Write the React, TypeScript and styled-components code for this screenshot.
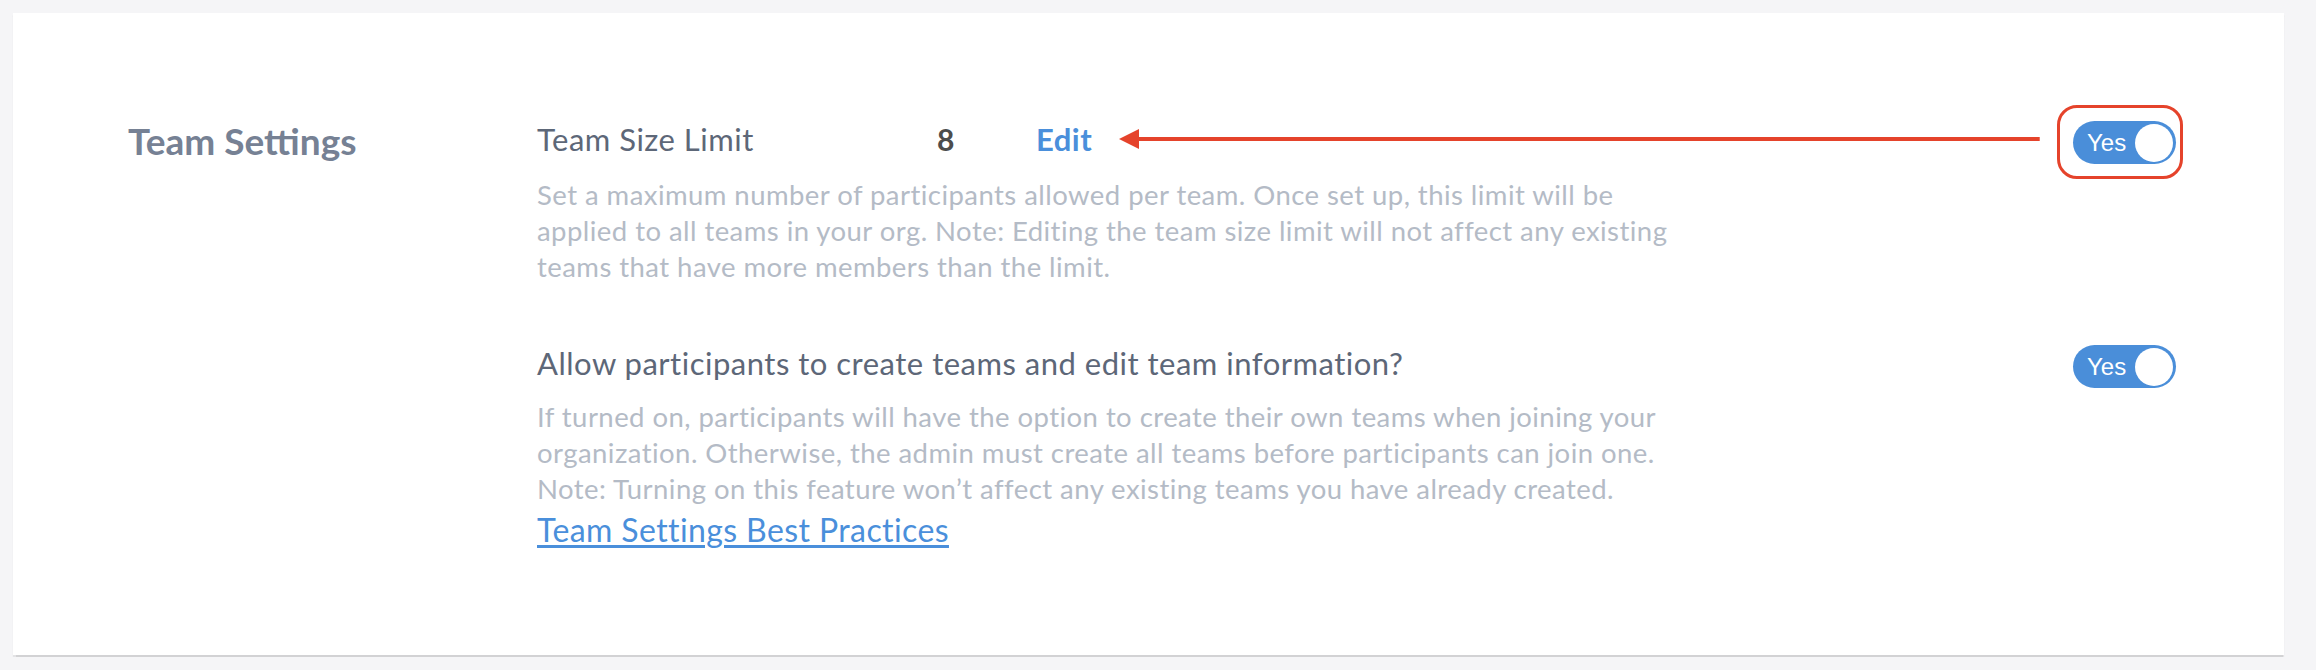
import React from "react";
import styled, { createGlobalStyle } from "styled-components";

const GlobalStyle = createGlobalStyle`
  html, body {
    margin: 0;
    padding: 0;
    background: #f5f5f7;
  }
  body {
    font-family: Lato, "Open Sans", sans-serif;
  }
`;

const Page = styled.div`
  padding: 13px 32px 15px 13px;
  background: #f5f5f7;
`;

const Card = styled.section`
  box-sizing: border-box;
  height: 642px;
  background: #ffffff;
  box-shadow: 0 1.5px 1px rgba(0, 0, 0, 0.14);
  padding: 105px 108px 0 115px;
  display: flex;
  align-items: flex-start;
`;

const SectionLabel = styled.h2`
  margin: 0;
  width: 409px;
  flex: none;
  font-family: Lato, sans-serif;
  font-weight: 700;
  font-size: 37px;
  line-height: 46px;
  color: #768194;
`;

const Settings = styled.div`
  flex: 1;
  display: flex;
  flex-direction: column;
`;

const Setting = styled.div<{ $gap?: number }>`
  display: flex;
  flex-direction: column;
  margin-top: ${(p) => p.$gap ?? 0}px;
`;

const Header = styled.div`
  display: flex;
  align-items: flex-start;
`;

const Title = styled.div<{ $width?: number }>`
  font-size: 31px;
  letter-spacing: 0.5px;
  line-height: 42px;
  color: #5d6778;
  flex: ${(p) => (p.$width ? "none" : "1")};
  width: ${(p) => (p.$width ? `${p.$width}px` : "auto")};
`;

const Value = styled.div`
  width: 99px;
  flex: none;
  font-size: 30px;
  line-height: 42px;
  font-weight: 700;
  color: #4d4d4d;
`;

const EditLink = styled.a`
  font-size: 31px;
  letter-spacing: 0.5px;
  line-height: 42px;
  font-weight: 700;
  color: #4a8fdb;
  text-decoration: none;
  cursor: pointer;
`;

const ArrowBox = styled.div`
  flex: 1;
  height: 42px;
  margin: 0 33px 0 27px;
  svg {
    display: block;
    width: 100%;
    height: 42px;
  }
`;

const Description = styled.p<{ $top: number }>`
  margin: ${(p) => p.$top}px 0 0;
  max-width: 1140px;
  font-size: 27.5px;
  letter-spacing: 0.45px;
  line-height: 36px;
  color: #b4bbc6;
`;

const DocLink = styled.a`
  margin-top: 2px;
  align-self: flex-start;
  font-size: 32px;
  letter-spacing: 0.4px;
  line-height: 42px;
  color: #4a8fdb;
  text-decoration: underline;
  text-underline-offset: 3px;
  cursor: pointer;
`;

const ToggleWrap = styled.div`
  position: relative;
  flex: none;
  margin-top: 3px;
`;

const Toggle = styled.button`
  box-sizing: border-box;
  width: 103px;
  height: 43px;
  border: none;
  border-radius: 22px;
  background: #4a8ed9;
  padding: 0 3px 0 14px;
  display: flex;
  align-items: center;
  justify-content: space-between;
  cursor: pointer;
`;

const ToggleText = styled.span`
  font-family: "Liberation Sans", Arial, sans-serif;
  font-size: 24px;
  color: #ffffff;
`;

const Knob = styled.span`
  width: 38px;
  height: 38px;
  border-radius: 50%;
  background: #ffffff;
`;

const Highlight = styled.div`
  position: absolute;
  left: -16px;
  top: -16px;
  width: 126px;
  height: 74px;
  box-sizing: border-box;
  border: 3px solid #e5432b;
  border-radius: 20px;
  pointer-events: none;
`;

const Switch = ({ highlighted }: { highlighted?: boolean }) => (
  <ToggleWrap>
    <Toggle type="button" aria-pressed="true">
      <ToggleText>Yes</ToggleText>
      <Knob />
    </Toggle>
    {highlighted && <Highlight />}
  </ToggleWrap>
);

const Arrow = () => (
  <ArrowBox>
    <svg xmlns="http://www.w3.org/2000/svg">
      <line x1="16" y1="21" x2="100%" y2="21" stroke="#e5432b" strokeWidth="4" />
      <polygon points="0,21 20,11 20,31" fill="#e5432b" />
    </svg>
  </ArrowBox>
);

export default function App() {
  return (
    <>
      <GlobalStyle />
      <Page>
        <Card>
          <SectionLabel>Team Settings</SectionLabel>
          <Settings>
            <Setting>
              <Header>
                <Title $width={400}>Team Size Limit</Title>
                <Value>8</Value>
                <EditLink>Edit</EditLink>
                <Arrow />
                <Switch highlighted />
              </Header>
              <Description $top={13}>
                Set a maximum number of participants allowed per team. Once set up, this limit will be
                applied to all teams in your org. Note: Editing the team size limit will not affect any
                existing teams that have more members than the limit.
              </Description>
            </Setting>
            <Setting $gap={57}>
              <Header>
                <Title>Allow participants to create teams and edit team information?</Title>
                <Switch />
              </Header>
              <Description $top={11}>
                If turned on, participants will have the option to create their own teams when joining
                your organization. Otherwise, the admin must create all teams before participants can
                join one. Note: Turning on this feature won’t affect any existing teams you have already
                created.
              </Description>
              <DocLink>Team Settings Best Practices</DocLink>
            </Setting>
          </Settings>
        </Card>
      </Page>
    </>
  );
}
